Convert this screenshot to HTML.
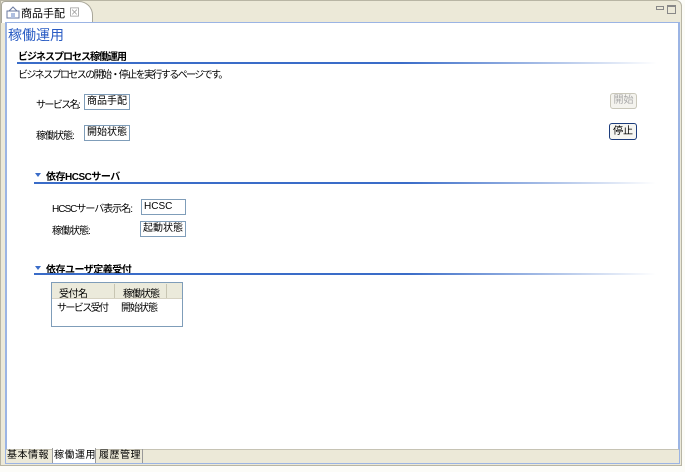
<!DOCTYPE html>
<html><head><meta charset="utf-8"><style>
*{margin:0;padding:0;box-sizing:border-box}
body{width:685px;height:472px;background:#fcfcf8;position:relative;overflow:hidden;font-family:"Liberation Sans","Noto Sans CJK JP",sans-serif;font-size:10px;color:#000}
.a{position:absolute;white-space:nowrap}
.k{letter-spacing:-1.6px}
.box{position:absolute;border:1px solid #7f9db9;background:#fff;padding:0 2px;line-height:14px;font-size:10px;height:16px}
</style></head><body>
<div class="a" style="left:0;top:0;width:682px;height:466px;background:#ece9d8;border:1px solid #b8b5a4;border-radius:0 6px 0 0"></div>
<div class="a" style="left:1px;top:1px;width:92px;height:22px;background:#fff;border:1px solid #a9a79a;border-bottom:none;border-radius:4px 14px 0 0"></div>
<svg class="a" style="left:6px;top:5px" width="14" height="14"><rect x="1" y="6" width="12" height="7" fill="none" stroke="#6a7aa0"/><path d="M3 6 L7 2 L11 6" fill="none" stroke="#6a7aa0"/><rect x="5" y="8" width="4" height="5" fill="#b0c0e0"/></svg>
<div class="a" style="left:21px;top:5px;font-size:11px">商品手配</div>
<div class="a" style="left:69px;top:4px;color:#999;font-size:11px">⊠</div>
<div class="a" style="left:656px;top:6px;width:8px;height:4px;border:1px solid #888"></div>
<div class="a" style="left:667px;top:5px;width:9px;height:9px;border:1px solid #888;border-top-width:2px"></div>
<div class="a" style="left:5px;top:22px;width:675px;height:442px;background:#fff;border:2px solid #9bb4e4;border-top:1px solid #9bb4e4"></div>
<div class="a" style="left:8px;top:25px;font-size:14px;color:#2a5cc4">稼働運用</div>
<div class="a" style="left:18px;top:48px;font-weight:bold;letter-spacing:-1px">ビジネスプロセス稼働運用</div>
<div class="a" style="left:17px;top:62px;width:640px;height:2px;background:linear-gradient(90deg,#3a6cc8,#3a6cc8 60%,#fff)"></div>
<div class="a k" style="left:18px;top:66px">ビジネスプロセスの開始・停止を実行するページです。</div>
<div class="a k" style="left:36px;top:96px">サービス名:</div>
<div class="box" style="left:84px;top:94px;width:46px">商品手配</div>
<div class="a" style="left:36px;top:127px;letter-spacing:-1px">稼働状態:</div>
<div class="box" style="left:84px;top:125px;width:46px">開始状態</div>
<div class="a" style="left:610px;top:93px;width:27px;height:16px;border:1px solid #c9c7ba;border-radius:3px;background:#f4f3ee;color:#aaa;text-align:center;line-height:14px">開始</div>
<div class="a" style="left:609px;top:123px;width:28px;height:17px;border:1px solid #1c3c7c;border-radius:3px;background:#f6f6f2;text-align:center;line-height:15px">停止</div>
<div class="a" style="left:35px;top:173px;width:0;height:0;border:3px solid transparent;border-top:4px solid #3a6cc8"></div>
<div class="a" style="left:46px;top:168px;font-weight:bold;letter-spacing:-0.5px">依存HCSCサーバ</div>
<div class="a" style="left:34px;top:182px;width:622px;height:2px;background:linear-gradient(90deg,#3a6cc8,#3a6cc8 60%,#fff)"></div>
<div class="a" style="left:52px;top:200px;letter-spacing:-1px">HCSCサーバ表示名:</div>
<div class="box" style="left:141px;top:199px;width:45px">HCSC</div>
<div class="a" style="left:52px;top:222px;letter-spacing:-1px">稼働状態:</div>
<div class="box" style="left:140px;top:221px;width:46px">起動状態</div>
<div class="a" style="left:35px;top:266px;width:0;height:0;border:3px solid transparent;border-top:4px solid #3a6cc8"></div>
<div class="a" style="left:46px;top:261px;font-weight:bold;letter-spacing:-0.5px">依存ユーザ定義受付</div>
<div class="a" style="left:34px;top:273px;width:622px;height:2px;background:linear-gradient(90deg,#3a6cc8,#3a6cc8 60%,#fff)"></div>
<div class="a" style="left:51px;top:282px;width:132px;height:45px;border:1px solid #7f9db9;background:#fff"></div>
<div class="a" style="left:52px;top:283px;width:130px;height:16px;background:#ebeadb;border-bottom:1px solid #d6d2c2"></div>
<div class="a" style="left:114px;top:284px;width:1px;height:14px;background:#c7c5b2"></div>
<div class="a" style="left:166px;top:284px;width:1px;height:14px;background:#c7c5b2"></div>
<div class="a" style="left:59px;top:285px;letter-spacing:-0.5px">受付名</div>
<div class="a" style="left:123px;top:285px;letter-spacing:-1px">稼働状態</div>
<div class="a k" style="left:57px;top:299px">サービス受付</div>
<div class="a" style="left:121px;top:299px;letter-spacing:-1px">開始状態</div>
<div class="a" style="left:6px;top:449px;width:673px;height:14px;background:#ece9d8;border-top:1px solid #c6c3b4"></div>
<div class="a" style="left:7px;top:450px;line-height:12px;letter-spacing:0.5px">基本情報</div>
<div class="a" style="left:52px;top:448px;width:44px;height:15px;background:#fff;border-left:1px solid #999;border-right:1px solid #999"></div>
<div class="a" style="left:54px;top:450px;line-height:12px;letter-spacing:0.5px">稼働運用</div>
<div class="a" style="left:99px;top:450px;line-height:12px;letter-spacing:0.5px">履歴管理</div>
<div class="a" style="left:142px;top:449px;width:1px;height:14px;background:#999"></div>
</body></html>
